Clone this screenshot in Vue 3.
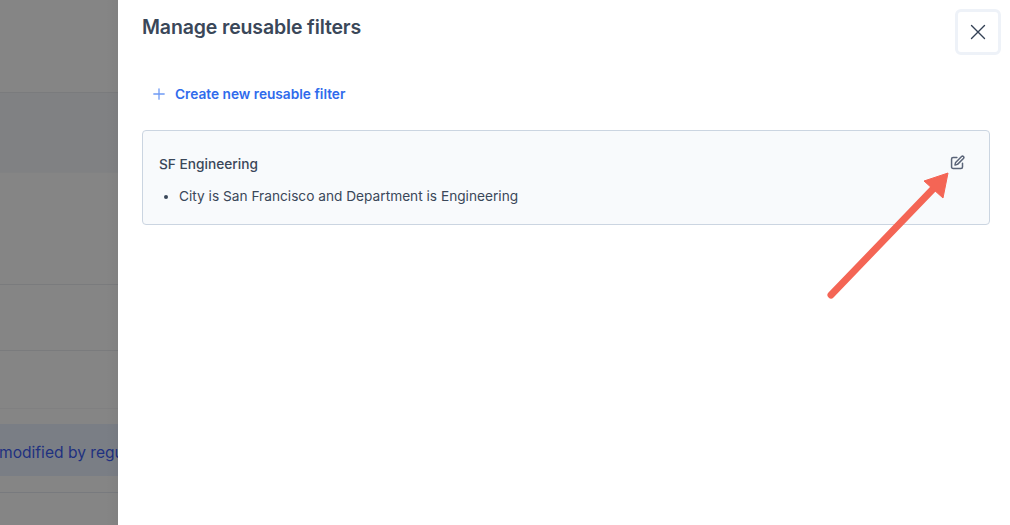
<script setup>
const title = 'Manage reusable filters'
</script>

<template>
  <div class="page">
    <div class="backdrop" aria-hidden="true">
      <div class="row head"></div>
      <div class="row shaded"></div>
      <div class="row tall"></div>
      <div class="row mid"></div>
      <div class="row low"></div>
      <div class="gap"></div>
      <div class="notice"><span>modified by regular</span></div>
      <div class="row foot"></div>
      <div class="row rest"></div>
    </div>
    <main class="panel">
      <header class="top">
        <h1>{{ title }}</h1>
        <button class="close" aria-label="Close">
          <svg width="16" height="16" viewBox="0 0 16 16" fill="none" stroke="#334155" stroke-width="1.4" stroke-linecap="round">
            <path d="M1.5 1.500l13 13M14.500 1.500l-13 13" />
          </svg>
        </button>
      </header>
      <button class="create">
        <svg width="12" height="12" viewBox="0 0 12 12" fill="none" stroke="#6f9af5" stroke-width="1.3" stroke-linecap="round">
          <path d="M6 .8v10.400M.8 6h10.400" />
        </svg>
        <span>Create new reusable filter</span>
      </button>
      <section class="card">
        <div class="card-head">
          <h2>SF Engineering</h2>
          <svg class="edit" width="15" height="15" viewBox="0 0 24 24" fill="none" stroke="#5a6478" stroke-width="2.400" stroke-linecap="round" stroke-linejoin="round">
            <path d="M11 4H5a2.500 2.500 0 0 0-2.500 2.500V19A2.500 2.500 0 0 0 5 21.500h12.500A2.500 2.500 0 0 0 20 19v-6" />
            <path d="M18.500 2.500a2.120 2.120 0 0 1 3 3L12 15l-4 1 1-4 9.500-9.500z" />
          </svg>
        </div>
        <ul>
          <li>City is San Francisco and Department is Engineering</li>
        </ul>
      </section>
      <svg class="arrow" width="132" height="130" viewBox="0 0 132 130" fill="none" aria-hidden="true">
        <path d="M13 123L115 17" stroke="#f46555" stroke-width="7" stroke-linecap="round" />
        <path d="M130 1L106 9L125 26Z" fill="#f46555" stroke="#f46555" stroke-width="1" stroke-linejoin="round" />
      </svg>
    </main>
  </div>
</template>

<style>
html, body { margin: 0; background: #fff; }
</style>

<style scoped>
.page {
  display: flex;
  width: 1010px;
  height: 525px;
  overflow: hidden;
  font-family: Inter, "Liberation Sans", sans-serif;
  color: #3a4759;
}
.backdrop {
  flex: 0 0 118px;
  display: flex;
  flex-direction: column;
  height: 525px;
  overflow: hidden;
  background: #858585;
  position: relative;
}
.backdrop::after {
  content: "";
  position: absolute;
  top: 0;
  right: 0;
  bottom: 0;
  width: 12px;
  background: linear-gradient(to right, rgba(0,0,0,0), rgba(0,0,0,.035));
}
.row { box-sizing: border-box; border-bottom: 1px solid #7a7b7d; flex: none; }
.head { height: 93px; }
.shaded { height: 80px; background: #808183; border-bottom-color: #818283; }
.tall { height: 112px; }
.mid { height: 66px; }
.low { height: 58px; border-bottom-color: #808081; }
.gap { height: 15px; flex: none; }
.notice {
  flex: none;
  box-sizing: border-box;
  height: 52px;
  padding-top: 6px;
  background: #7a7e85;
  display: flex;
  align-items: center;
  overflow: hidden;
  white-space: nowrap;
}
.notice span {
  margin-left: -1px;
  font-size: 15.6px;
  line-height: 20px;
  color: #1f3180;
  flex: none;
}
.foot { height: 17px; border-bottom-color: #787a7e; }
.rest { flex: 1; border: 0; }
.panel {
  flex: 1;
  position: relative;
  box-sizing: border-box;
  padding: 0 20px 0 24px;
  background: #fff;
}
.top {
  display: flex;
  justify-content: space-between;
  align-items: flex-start;
  height: 76px;
}
h1 {
  margin: 15px 0 0;
  font-size: 19.500px;
  line-height: 24px;
  font-weight: 600;
  letter-spacing: -.14px;
}
.close {
  box-sizing: border-box;
  width: 46px;
  height: 46px;
  margin: 9px -11px 0 0;
  display: flex;
  align-items: center;
  justify-content: center;
  padding: 0;
  background: #fff;
  border: 3px solid #eef2f8;
  border-radius: 6px;
}
.create {
  display: flex;
  align-items: center;
  gap: 10px;
  height: 36px;
  padding: 0 0 0 11px;
  background: none;
  border: 0;
  font: 600 13.700px/20px Inter, "Liberation Sans", sans-serif;
  color: #2f6bec;
}
.card {
  box-sizing: border-box;
  height: 95px;
  margin-top: 18px;
  padding: 17px 16px 0;
  border: 1px solid #cbd5e1;
  border-radius: 4px;
  background: #f8fafc;
}
.card-head {
  display: flex;
  justify-content: space-between;
  align-items: center;
  height: 32px;
}
h2 {
  margin: 0;
  font-size: 13.700px;
  line-height: 20px;
  font-weight: 500;
}
.edit { margin-right: 8px; margin-top: -3px; }
ul { margin: 6px 0 0; padding: 0 0 0 20px; }
li { font-size: 13.700px; line-height: 20px; }
.arrow { position: absolute; left: 700px; top: 172px; }
</style>
